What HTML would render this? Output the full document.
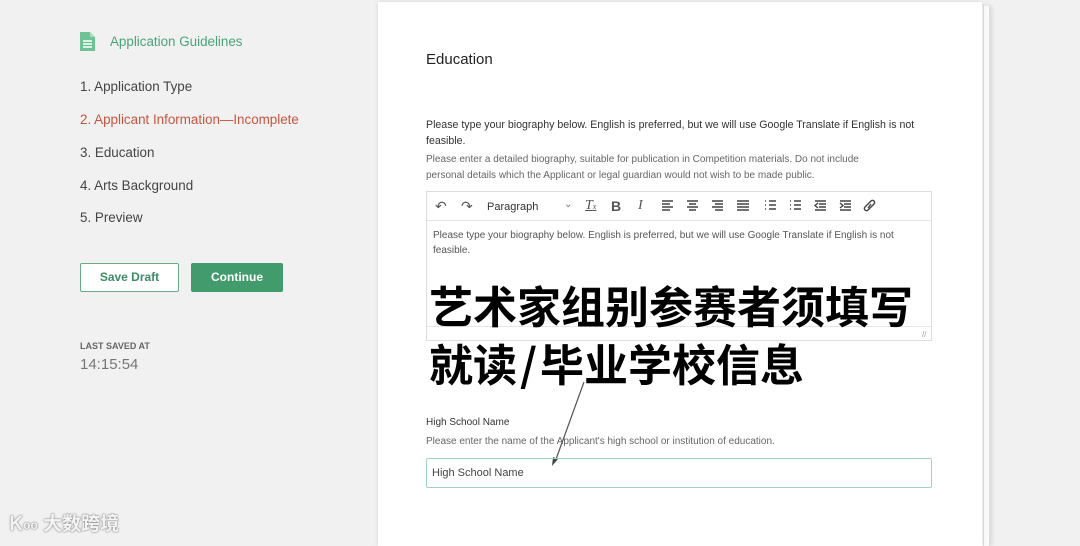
<!DOCTYPE html>
<html><head><meta charset="utf-8"><style>
*{margin:0;padding:0;box-sizing:border-box}
html,body{width:1080px;height:546px;overflow:hidden}
body{background:#f1f1f1;font-family:"Liberation Sans","Noto Sans CJK SC",sans-serif;position:relative;color:#333}
.a{position:absolute;white-space:nowrap}
.nav{font-size:13.4px;color:#444}
.panel{position:absolute;left:378px;top:2px;width:604px;height:544px;background:#fff;box-shadow:0 0 4px rgba(0,0,0,.12)}
.edge{position:absolute;top:6px;height:540px;background:#fafafa;border-right:1px solid #ddd}
.tb{position:absolute;top:198px;font-size:14px;color:#555}
</style></head><body>
<div class="edge" style="left:978px;width:12px;box-shadow:2px 0 4px rgba(0,0,0,.1)"></div>
<div class="edge" style="left:975px;width:9px"></div>
<div class="panel"></div>

<svg class="a" style="left:80px;top:32px" width="15" height="19" viewBox="0 0 15 19"><path d="M0 0h10l5 5v14H0z" fill="#6fc295"/><path d="M10 0v5h5" fill="#a8dcbf"/><path d="M3 9h9M3 12h9M3 15h9" stroke="#fff" stroke-width="1.4"/></svg>
<div class="a" style="left:110px;top:34px;font-size:13.4px;color:#4aa37a">Application Guidelines</div>
<div class="a nav" style="left:80px;top:79px">1. Application Type</div>
<div class="a nav" style="left:80px;top:112px;color:#c9553f">2. Applicant Information—Incomplete</div>
<div class="a nav" style="left:80px;top:145px">3. Education</div>
<div class="a nav" style="left:80px;top:178px">4. Arts Background</div>
<div class="a nav" style="left:80px;top:210px">5. Preview</div>
<div class="a" style="left:80px;top:263px;width:99px;height:29px;border:1px solid #6aaa8a;background:#fff;border-radius:2px;color:#3d8c66;font-weight:bold;font-size:12px;text-align:center;line-height:27px">Save Draft</div>
<div class="a" style="left:191px;top:263px;width:92px;height:29px;background:#419b6c;border-radius:2px;color:#fff;font-weight:bold;font-size:12px;text-align:center;line-height:29px">Continue</div>
<div class="a" style="left:80px;top:341px;font-size:9px;font-weight:bold;color:#666">LAST SAVED AT</div>
<div class="a" style="left:80px;top:356px;font-size:15px;color:#777">14:15:54</div>
<div class="a" style="left:10px;top:513px;font-size:19px;line-height:24px;color:#f4f4f4;text-shadow:0 0 2px #888,0 0 1px #777;font-weight:bold">Ꮶ<span style="font-size:12px;vertical-align:top">oo</span> 大数跨境</div>

<div class="a" style="left:426px;top:51px;font-size:15px;color:#222">Education</div>
<div class="a" style="left:426px;top:117px;font-size:10.6px;color:#333;line-height:16px;white-space:normal;width:506px">Please type your biography below. English is preferred, but we will use Google Translate if English is not feasible.</div>
<div class="a" style="left:426px;top:152px;font-size:10px;color:#666;line-height:16px;white-space:normal;width:445px">Please enter a detailed biography, suitable for publication in Competition materials. Do not include personal details which the Applicant or legal guardian would not wish to be made public.</div>

<div class="a" style="left:426px;top:191px;width:506px;height:150px;border:1px solid #ddd"></div>
<div class="a" style="left:427px;top:220px;width:504px;height:1px;background:#e5e5e5"></div>
<div class="tb" style="left:435px">↶</div><div class="tb" style="left:461px">↷</div>
<div class="a" style="left:487px;top:201px;font-size:11px;color:#333">Paragraph</div>
<div class="a" style="left:564px;top:199px;font-size:10px;color:#777">⌄</div>
<div class="tb" style="left:585px;font-style:italic;text-decoration:underline;font-family:'Liberation Serif'">T<span style="font-size:8px">x</span></div>
<div class="tb" style="left:611px;font-weight:bold">B</div>
<div class="tb" style="left:638px;font-style:italic;font-family:'Liberation Serif'">I</div>
<svg class="a" style="left:660px;top:199px" width="220" height="14" viewBox="0 0 220 14" stroke="#444" stroke-width="1.4" fill="none">
<path d="M2 2h11M2 5h8M2 8h11M2 11h8"/>
<path d="M27 2h11M29 5h7M27 8h11M29 11h7"/>
<path d="M52 2h11M55 5h8M52 8h11M55 11h8"/>
<path d="M77 2h12M77 5h12M77 8h12M77 11h12"/>
<path d="M105 2h1M109 2h7M105 6h1M109 6h7M105 10h1M109 10h7"/>
<path d="M130 2h1M134 2h7M130 6h1M134 6h7M130 10h1M134 10h7"/>
<path d="M155 2h11M159 5h7M159 8h7M155 11h11M158 4l-3 2.5 3 2.5"/>
<path d="M180 2h11M184 5h7M184 8h7M180 11h11M180 4l3 2.5-3 2.5"/>
<path d="M208 5l-3 3a2 2 0 0 0 3 3l3-3M211 8l3-3a2 2 0 0 0-3-3l-3 3M208 9l3-4"/>
</svg>
<div class="a" style="left:433px;top:228px;font-size:10px;color:#555;line-height:15px;white-space:normal;width:495px">Please type your biography below. English is preferred, but we will use Google Translate if English is not feasible.</div>
<div class="a" style="left:427px;top:326px;width:504px;height:1px;background:#e5e5e5"></div>
<div class="a" style="left:922px;top:330px;font-size:8px;color:#999">//</div>

<div class="a" style="left:429px;top:275px;font-size:44px;font-weight:700;color:#000;font-family:'Noto Sans CJK SC',sans-serif;letter-spacing:0;line-height:58px">艺术家组别参赛者须填写<br>就读<span style="margin:0 3px">/</span>毕业学校信息</div>

<svg class="a" style="left:540px;top:380px" width="50" height="90"><path d="M44 2L15 82" stroke="#555" stroke-width="1.2"/><path d="M12 86l1-9 5 2z" fill="#444"/></svg>

<div class="a" style="left:426px;top:417px;font-size:10px;color:#333">High School Name</div>
<div class="a" style="left:426px;top:436px;font-size:10px;color:#666">Please enter the name of the Applicant's high school or institution of education.</div>
<div class="a" style="left:426px;top:458px;width:506px;height:30px;border:1px solid #9fd3c0;border-radius:2px;font-size:11px;color:#444;padding:8px 5px">High School Name</div>
</body></html>
